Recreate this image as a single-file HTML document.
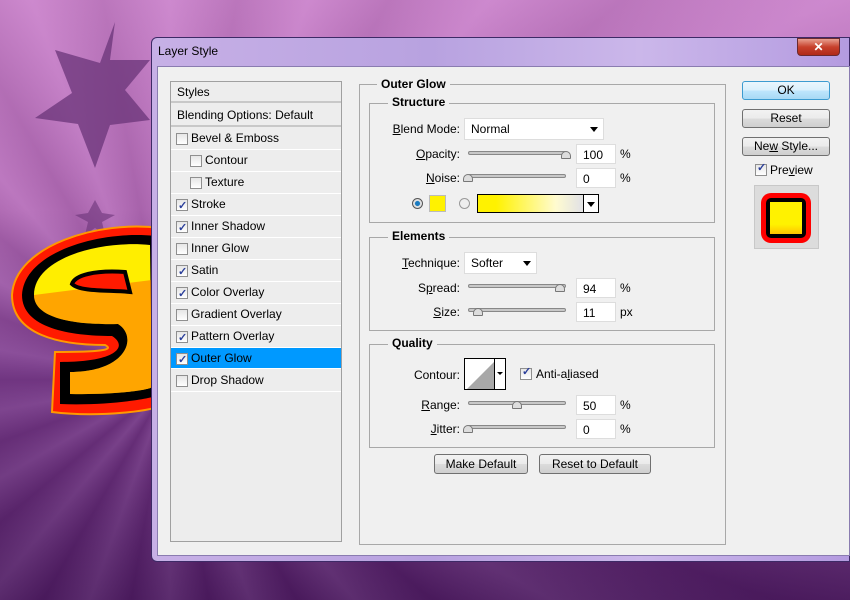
<!DOCTYPE html>
<html style="overflow:hidden;width:850px;height:600px"><head><meta charset="utf-8"><style>
*{margin:0;padding:0;box-sizing:border-box}
body{width:850px;height:600px;overflow:hidden;position:relative;font-family:"Liberation Sans",Arial,sans-serif;font-size:12px;color:#000;
background:linear-gradient(180deg,#c97fca 0%,#b46ab8 35%,#7a3a8c 62%,#4e1b62 100%);}
.rays{position:absolute;left:0;top:0;width:850px;height:600px;background:repeating-conic-gradient(from 0deg at 170px 380px,rgba(255,255,255,.08) 0deg,rgba(0,0,0,.07) 10deg,rgba(255,255,255,.08) 20deg)}
.a{position:absolute}
.dlg{left:151px;top:37px;width:699px;height:525px;border:1px solid #3d2a66;border-radius:6px 0 0 6px;background:linear-gradient(90deg,#c7b0e6,#b8a2e0 40%,#cbb7ea 70%,#b49be0);}
.inner{left:157px;top:66px;width:693px;height:490px;background:#f0f0f0;border:1px solid #8a7cb0;}
.list{left:170px;top:81px;width:172px;height:461px;background:#ededed;border:1px solid #a0a0a0;}
.row{position:absolute;left:0;width:170px;height:22px;border-bottom:1px solid #fff;line-height:21px;font-size:12px}
.cb{position:absolute;width:12px;height:12px;border:1px solid #8f8f8f;background:linear-gradient(#e6e6e6,#fff);top:5px}
.cb.on::after{content:"✓";position:absolute;left:1px;top:-4px;font-size:11px;color:#2a3e9a;font-weight:bold}
.sel{background:#0099ff}
.box{border:1px solid #a8a8a8;}
.lg{position:absolute;background:#f0f0f0;font-weight:bold;padding:0 4px;font-size:12px}
.lbl{position:absolute;text-align:right;width:100px;font-size:12px}
.trk{position:absolute;height:4px;width:98px;border:1px solid #888;border-radius:2px;background:#c8c8c8}
.th{position:absolute;width:10px;height:8px;background:#ddd;border:1px solid #777;border-radius:5px 5px 1px 1px}
.inp{position:absolute;width:40px;height:20px;background:#fff;border:1px solid #ddd;padding:3px 0 0 6px}
.btn{position:absolute;height:20px;border:1px solid #707070;border-radius:3px;background:linear-gradient(#f2f2f2,#ebebeb 50%,#dcdcdc 51%,#cfcfcf);text-align:center;line-height:18px}
.sel2{position:absolute;background:#fff;border:1px solid #ddd;padding:3px 0 0 6px}
.arr{position:absolute;right:5px;top:8px;border-left:4px solid transparent;border-right:4px solid transparent;border-top:5px solid #000}
</style></head><body>
<div class="rays"></div>
<svg class="a" style="left:0;top:0;display:block" width="160" height="440">
<polygon points="115,22 100,63 55,50 72,93 35,118 78,124 95,168 110,125 150,120 125,90 150,60 110,60" fill="#6a3478" opacity=".75"/>
<polygon points="95,200 88,213 75,215 88,222 85,235 95,228 105,235 102,222 115,215 102,213" fill="#6a3478" opacity=".6"/>
<path d="M160,228 C100,220 15,245 12,295 C12,335 60,345 105,345 C115,350 100,352 55,352 L52,412 C100,418 160,410 160,405 Z" fill="#ff1a00" stroke="#ff9900" stroke-width="2"/>
<path d="M155,236 C100,230 24,252 22,295 C22,328 70,336 112,336 C128,346 118,362 60,362 L60,404 C110,406 155,398 158,395 Z" fill="#000"/>
<path d="M150,245 C100,240 34,258 34,295 C34,320 80,325 118,324 C138,336 128,372 70,372 L70,394 C115,395 150,390 152,387 Z" fill="#ffee00"/>
<path d="M34,295 C34,320 80,325 118,324 C138,336 128,372 70,372 L70,394 C115,395 150,390 152,387 L152,280 Z" fill="#ff6a00" opacity=".55"/>
<path d="M125,272 C95,270 75,275 72,284 C80,292 110,290 130,292 Z" fill="#ff1a00" stroke="#000" stroke-width="4"/>
</svg>
<div class="a dlg"></div>
<div class="a" style="left:158px;top:44px;font-size:12px">Layer Style</div>
<div class="a" style="left:797px;top:38px;width:43px;height:18px;border-radius:0 0 4px 4px;background:linear-gradient(#e8a090,#c7402c 50%,#b02a18);border:1px solid #6a2a30;color:#fff;text-align:center;font-weight:bold;line-height:16px">✕</div>
<div class="a inner"></div>
<div class="a list">
 <div class="row" style="top:0;height:21px;padding-left:6px;border-bottom:2px solid #c8c8c8">Styles</div>
 <div class="row" style="top:23px;height:22px;padding-left:6px;border-bottom:2px solid #c8c8c8">Blending Options: Default</div>
 <div class="row" style="top:46px"><span class="cb" style="left:5px"></span><span style="position:absolute;left:20px">Bevel &amp; Emboss</span></div>
 <div class="row" style="top:68px"><span class="cb" style="left:19px"></span><span style="position:absolute;left:34px">Contour</span></div>
 <div class="row" style="top:90px"><span class="cb" style="left:19px"></span><span style="position:absolute;left:34px">Texture</span></div>
 <div class="row" style="top:112px"><span class="cb on" style="left:5px"></span><span style="position:absolute;left:20px">Stroke</span></div>
 <div class="row" style="top:134px"><span class="cb on" style="left:5px"></span><span style="position:absolute;left:20px">Inner Shadow</span></div>
 <div class="row" style="top:156px"><span class="cb" style="left:5px"></span><span style="position:absolute;left:20px">Inner Glow</span></div>
 <div class="row" style="top:178px"><span class="cb on" style="left:5px"></span><span style="position:absolute;left:20px">Satin</span></div>
 <div class="row" style="top:200px"><span class="cb on" style="left:5px"></span><span style="position:absolute;left:20px">Color Overlay</span></div>
 <div class="row" style="top:222px"><span class="cb" style="left:5px"></span><span style="position:absolute;left:20px">Gradient Overlay</span></div>
 <div class="row" style="top:244px"><span class="cb on" style="left:5px"></span><span style="position:absolute;left:20px">Pattern Overlay</span></div>
 <div class="row sel" style="top:266px;height:21px"><span class="cb on" style="left:5px"></span><span style="position:absolute;left:20px">Outer Glow</span></div>
 <div class="row" style="top:288px"><span class="cb" style="left:5px"></span><span style="position:absolute;left:20px">Drop Shadow</span></div>
</div>
<div class="a box" style="left:359px;top:84px;width:367px;height:461px"></div>
<div class="lg" style="left:377px;top:77px">Outer Glow</div>
<div class="a box" style="left:369px;top:103px;width:346px;height:120px"></div>
<div class="lg" style="left:388px;top:95px">Structure</div>
<div class="lbl" style="left:360px;top:122px"><u>B</u>lend Mode:</div>
<div class="sel2" style="left:464px;top:118px;width:140px;height:22px">Normal<span class="arr"></span></div>
<div class="lbl" style="left:360px;top:147px"><u>O</u>pacity:</div>
<div class="trk" style="left:468px;top:151px"></div><div class="th" style="left:561px;top:151px"></div>
<div class="inp" style="left:576px;top:144px">100</div><div class="a" style="left:620px;top:147px">%</div>
<div class="lbl" style="left:360px;top:171px"><u>N</u>oise:</div>
<div class="trk" style="left:468px;top:174px"></div><div class="th" style="left:463px;top:174px"></div>
<div class="inp" style="left:576px;top:168px">0</div><div class="a" style="left:620px;top:171px">%</div>
<div class="a" style="left:412px;top:198px;width:11px;height:11px;border-radius:50%;border:1px solid #555;background:radial-gradient(#1a7bc0 35%,#e0e0e0 45%)"></div>
<div class="a" style="left:429px;top:195px;width:17px;height:17px;background:#fff200;border:1px solid #bbb"></div>
<div class="a" style="left:459px;top:198px;width:11px;height:11px;border-radius:50%;border:1px solid #999;background:#eee"></div>
<div class="a" style="left:477px;top:194px;width:122px;height:19px;border:1px solid #000;background:linear-gradient(90deg,#fff200 0%,#fff200 15%,#fffbd0 65%,#e4e4e4 85%)"></div>
<div class="a" style="left:583px;top:194px;width:16px;height:19px;border:1px solid #000;background:#fff"><span class="arr" style="right:3px;top:7px"></span></div>
<div class="a box" style="left:369px;top:237px;width:346px;height:94px"></div>
<div class="lg" style="left:388px;top:229px">Elements</div>
<div class="lbl" style="left:360px;top:256px"><u>T</u>echnique:</div>
<div class="sel2" style="left:464px;top:252px;width:73px;height:22px">Softer<span class="arr"></span></div>
<div class="lbl" style="left:360px;top:281px">S<u>p</u>read:</div>
<div class="trk" style="left:468px;top:284px"></div><div class="th" style="left:555px;top:284px"></div>
<div class="inp" style="left:576px;top:278px">94</div><div class="a" style="left:620px;top:281px">%</div>
<div class="lbl" style="left:360px;top:305px"><u>S</u>ize:</div>
<div class="trk" style="left:468px;top:308px"></div><div class="th" style="left:473px;top:308px"></div>
<div class="inp" style="left:576px;top:302px">11</div><div class="a" style="left:620px;top:305px">px</div>
<div class="a box" style="left:369px;top:344px;width:346px;height:104px"></div>
<div class="lg" style="left:388px;top:336px">Quality</div>
<div class="lbl" style="left:360px;top:368px">Contour:</div>
<div class="a" style="left:464px;top:358px;width:42px;height:32px;border:1px solid #000;background:#fff"></div>
<svg class="a" style="left:465px;top:359px" width="30" height="30"><polygon points="2,30 30,2 30,30" fill="#a8a8a8"/></svg>
<div class="a" style="left:494px;top:358px;width:12px;height:32px;border:1px solid #000;background:#fff"><span class="arr" style="right:2px;top:13px;border-width:3px 3px 0"></span></div>
<div class="cb on a" style="left:520px;top:368px"></div>
<div class="a" style="left:536px;top:367px">Anti-a<u>l</u>iased</div>
<div class="lbl" style="left:360px;top:398px"><u>R</u>ange:</div>
<div class="trk" style="left:468px;top:401px"></div><div class="th" style="left:512px;top:401px"></div>
<div class="inp" style="left:576px;top:395px">50</div><div class="a" style="left:620px;top:398px">%</div>
<div class="lbl" style="left:360px;top:422px"><u>J</u>itter:</div>
<div class="trk" style="left:468px;top:425px"></div><div class="th" style="left:463px;top:425px"></div>
<div class="inp" style="left:576px;top:419px">0</div><div class="a" style="left:620px;top:422px">%</div>
<div class="btn" style="left:434px;top:454px;width:94px">Make Default</div>
<div class="btn" style="left:539px;top:454px;width:112px">Reset to Default</div>
<div class="btn" style="left:742px;top:81px;width:88px;height:19px;border-color:#3c9bd0;background:linear-gradient(#eaf6fd,#d9f0fc 50%,#bee6fd 51%,#a7d9f5);line-height:17px">OK</div>
<div class="btn" style="left:742px;top:109px;width:88px;height:19px;line-height:17px">Reset</div>
<div class="btn" style="left:742px;top:137px;width:88px;height:19px;line-height:17px">Ne<u>w</u> Style...</div>
<div class="cb on a" style="left:755px;top:164px"></div>
<div class="a" style="left:770px;top:163px">Pre<u>v</u>iew</div>
<div class="a" style="left:754px;top:185px;width:65px;height:64px;background:#dcdcdc;border:1px solid #c8c8c8"></div>
<div class="a" style="left:761px;top:193px;width:50px;height:50px;border-radius:10px;background:#ff0000"></div>
<div class="a" style="left:766px;top:198px;width:40px;height:40px;border-radius:5px;background:#000"></div>
<div class="a" style="left:770px;top:202px;width:32px;height:32px;background:linear-gradient(#fff200 70%,#ffc400)"></div>
</body></html>
